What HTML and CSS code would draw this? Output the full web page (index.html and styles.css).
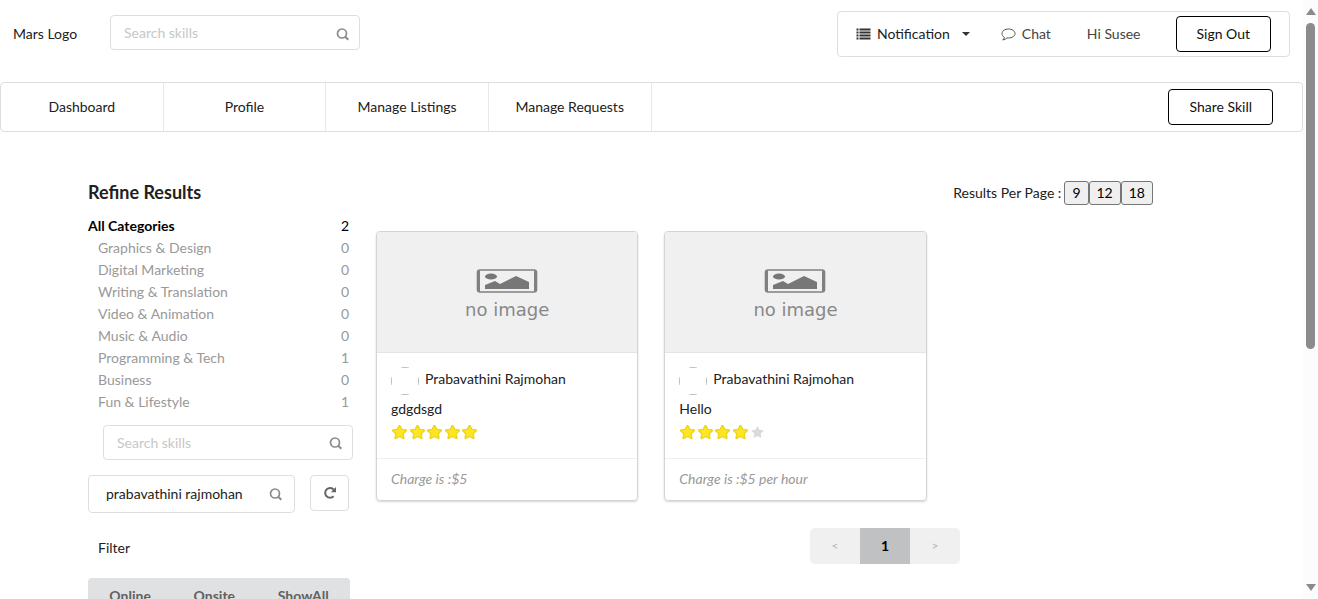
FILE: index.html
```html
<!DOCTYPE html>
<html lang="en">
<head>
<meta charset="utf-8">
<title>Search Skills</title>
<link rel="stylesheet" href="styles.css">
</head>
<body>
<svg class="defs" aria-hidden="true">
  <symbol id="search" viewBox="0 0 14 14"><circle cx="6" cy="6.500" r="4.500" fill="none" stroke="currentColor" stroke-width="1.700"/><path d="M9.200 9.700 12.300 12.800" stroke="currentColor" stroke-width="2"/></symbol>
  <symbol id="star" viewBox="0 0 1792 1792"><path stroke-linejoin="round" d="M1728 647q0 22-26 48l-363 354 86 500q1 7 1 20 0 21-10.500 35.500t-30.500 14.500q-19 0-40-12l-449-236-449 236q-22 12-40 12-21 0-31.500-14.500t-10.500-35.500q0-6 2-20l86-500-364-354q-25-27-25-48 0-37 56-46l502-73 225-455q19-41 49-41t49 41l225 455 502 73q56 9 56 46z"/></symbol>
  <symbol id="noimage" viewBox="0 0 62 24"><rect x="1.500" y="1" width="59" height="22" rx="2.500" fill="#f0f0f0" stroke="#808080" stroke-width="1.600"/><path d="M2.500 2v20M59.500 2v20" stroke="#808080" stroke-width="3"/><ellipse cx="15" cy="7.500" rx="6" ry="3" fill="#777"/><path d="M9 20v-4l10-4 5 3 16-8 13 6v7z" fill="#777"/></symbol>
</svg>
<div class="window">
  <div class="page">
    <header class="top">
      <span class="logo">Mars Logo</span>
      <div class="search top-search">
        <input type="text" placeholder="Search skills" aria-label="Search skills">
        <svg class="icon lower"><use href="#search"/></svg>
      </div>
      <div class="user-menu">
        <button class="plain notice">
          <svg class="list" viewBox="0 0 14 12"><path d="M0 1.500h2M3 1.500h11M0 4.500h2M3 4.500h11M0 7.500h2M3 7.500h11M0 10.500h2M3 10.500h11" stroke="#333" stroke-width="2"/></svg>
          Notification
          <svg class="caret" viewBox="0 0 8 4"><path d="M0 0h8L4 4z" fill="#333"/></svg>
        </button>
        <a class="chat" href="#"><svg class="bubble" viewBox="0 0 15 13"><path d="M7.500 1C11 1 14 2.900 14 5.500S11 10 7.500 10L6 9.900C5 11 3.500 11.800 1.800 12c.9-.7 1.300-1.500 1.500-2.800C1.800 8.400 1 7 1 5.500 1 2.900 4 1 7.500 1z" fill="none" stroke="#555"/></svg>Chat</a>
        <span class="greeting">Hi Susee</span>
        <button class="outline">Sign Out</button>
      </div>
    </header>
    <nav class="nav">
      <a href="#">Dashboard</a><a href="#">Profile</a><a href="#">Manage Listings</a><a href="#">Manage Requests</a>
      <button class="outline">Share Skill</button>
    </nav>
    <div class="content">
      <aside class="sidebar">
        <h3>Refine Results</h3>
        <ul class="categories">
          <li class="all"><a href="#"><b>All Categories</b><span>2</span></a></li>
          <li><a href="#">Graphics &amp; Design<span>0</span></a></li>
          <li><a href="#">Digital Marketing<span>0</span></a></li>
          <li><a href="#">Writing &amp; Translation<span>0</span></a></li>
          <li><a href="#">Video &amp; Animation<span>0</span></a></li>
          <li><a href="#">Music &amp; Audio<span>0</span></a></li>
          <li><a href="#">Programming &amp; Tech<span>1</span></a></li>
          <li><a href="#">Business<span>0</span></a></li>
          <li><a href="#">Fun &amp; Lifestyle<span>1</span></a></li>
        </ul>
        <div class="search side-search">
          <input type="text" placeholder="Search skills" aria-label="Search skills">
          <svg class="icon"><use href="#search"/></svg>
        </div>
        <div class="user-row">
          <div class="search user-search">
            <input type="text" value="prabavathini rajmohan" aria-label="Search user">
            <svg class="icon"><use href="#search"/></svg>
          </div>
          <button class="refresh" aria-label="Refresh"><svg viewBox="0 0 14 14"><path d="M10.600 10.300A4.900 4.900 0 1 1 10.800 3.700" fill="none" stroke="#666" stroke-width="2"/><path d="M13 1v5.200H7.800z" fill="#666"/></svg></button>
        </div>
        <p class="filter-title">Filter</p>
        <div class="filters"><button>Online</button><button>Onsite</button><button>ShowAll</button></div>
      </aside>
      <main class="main">
        <div class="per-page"><span>Results Per Page :</span><button>9</button><button>12</button><button>18</button></div>
        <div class="cards">
          <article class="card">
            <div class="image"><svg class="picture"><use href="#noimage"/></svg><span>no image</span></div>
            <div class="body">
              <a class="author" href="#"><i class="avatar"></i>Prabavathini Rajmohan</a>
              <p>gdgdsgd</p>
              <div class="stars" role="img" aria-label="5 of 5"><svg><use href="#star"/></svg><svg><use href="#star"/></svg><svg><use href="#star"/></svg><svg><use href="#star"/></svg><svg><use href="#star"/></svg></div>
            </div>
            <div class="charge">Charge is :$5</div>
          </article>
          <article class="card">
            <div class="image"><svg class="picture"><use href="#noimage"/></svg><span>no image</span></div>
            <div class="body">
              <a class="author" href="#"><i class="avatar"></i>Prabavathini Rajmohan</a>
              <p>Hello</p>
              <div class="stars" role="img" aria-label="4 of 5"><svg><use href="#star"/></svg><svg><use href="#star"/></svg><svg><use href="#star"/></svg><svg><use href="#star"/></svg><svg class="off"><use href="#star"/></svg></div>
            </div>
            <div class="charge">Charge is :$5 per hour</div>
          </article>
        </div>
        <div class="pages"><button disabled>&lt;</button><button class="current">1</button><button disabled>&gt;</button></div>
      </main>
    </div>
  </div>
  <div class="scrollbar" aria-hidden="true">
    <svg viewBox="0 0 10 7"><path d="M5 0 10 7H0z" fill="#8b8b8b"/></svg>
    <div class="track"><div class="thumb"></div></div>
    <svg viewBox="0 0 10 7"><path d="M5 7 10 0H0z" fill="#8b8b8b"/></svg>
  </div>
</div>
</body>
</html>
```
FILE: styles.css
```css
* { box-sizing: border-box; }
body { margin: 0; font: 14px/20px Lato, "Liberation Sans", sans-serif; color: #212121; background: #fff; }
button, input { font: inherit; color: inherit; margin: 0; }
button { cursor: pointer; }
a { color: inherit; text-decoration: none; }
h3, p, ul { margin: 0; padding: 0; }
.defs { display: none; }

.window { display: flex; height: 100vh; }
.page { flex: 1; min-width: 0; overflow: hidden; }

.top { display: flex; align-items: center; padding: 11px 13px 25px; }
.logo { width: 97px; }
.search { display: flex; align-items: center; border: 1px solid #dededf; border-radius: 4px; background: #fff; }
.search input { flex: 1; min-width: 0; border: 0; outline: 0; background: none; padding: 7px 13px; line-height: 19px; height: 33px; }
.search input::placeholder { color: #c7c7c7; }
.icon { width: 14px; height: 14px; margin-right: 9px; color: #8b8b8b; flex: none; }
.icon.lower { margin-top: 3px; }
.top-search { width: 250px; margin-bottom: 3px; }
.user-menu { display: flex; align-items: center; margin-left: auto; height: 46px; padding: 0 18px; border: 1px solid #dededf; border-radius: 4px; color: #444; }
.plain { display: flex; align-items: center; border: 0; background: none; padding: 0; color: #212121; }
.list { width: 15px; height: 12px; margin-right: 6px; }
.caret { width: 8px; height: 4px; margin-left: 12px; }
.chat { display: flex; align-items: center; margin: 0 36px 0 31px; }
.bubble { width: 15px; height: 13px; margin-right: 6px; }
.greeting { margin-right: 35px; }
.outline { height: 36px; padding: 0 20px; border: 1px solid #000; border-radius: 4px; background: #fff; color: #111; }

.nav { display: flex; align-items: center; height: 50px; border: 1px solid #dededf; border-radius: 4px; }
.nav a { flex: 0 0 12.5%; display: flex; align-items: center; justify-content: center; height: 48px; border-right: 1px solid #e8e8e8; }
.nav .outline { margin: 0 29px 0 auto; }

.content { display: grid; grid-template-columns: 262px minmax(0, 1fr); column-gap: 26px; margin: 0 88px; padding-top: 49px; }
.sidebar h3 { font-size: 18px; line-height: 22px; font-weight: 700; }
.categories { list-style: none; margin-top: 12px; color: #999; }
.categories a { display: flex; justify-content: space-between; line-height: 22px; padding: 0 1px 0 10px; }
.categories .all a { padding-left: 0; color: #000; }
.side-search { width: 250px; margin: 12px 0 15px 15px; }
.user-row { display: flex; align-items: flex-start; gap: 15px; padding-right: 1px; }
.user-search { flex: 1; min-width: 0; }
.user-search input { height: 36px; padding: 7px 0 9px 17px; }
.user-search .icon { margin-right: 11px; }
.refresh { display: flex; align-items: center; justify-content: center; width: 39px; height: 36px; padding: 0; border: 1px solid #dededf; border-radius: 4px; background: #fff; }
.refresh svg { width: 14px; height: 14px; }
.filter-title { margin: 25px 0 20px 10px; }
.filters { display: flex; border-radius: 4px; overflow: hidden; background: #e0e1e2; }
.filters button { flex: 1 1 auto; height: 36px; padding: 0; border: 0; background: none; font-weight: 700; color: #606060; }

.per-page { display: flex; justify-content: flex-end; align-items: center; padding-right: 62px; height: 24px; }
.per-page span { margin-right: 3px; }
.per-page button { height: 24px; padding: 1px 7px; border: 1px solid #767676; border-radius: 3px; background: #efefef; color: #000; }
.cards { display: grid; grid-template-columns: repeat(3, minmax(0, 1fr)); gap: 26px; margin-top: 26px; }
.card { border: 1px solid #d4d4d5; border-radius: 4px; box-shadow: 0 1px 2px #d4d4d5; overflow: hidden; }
.image { display: flex; flex-direction: column; align-items: center; height: 121px; padding-top: 37px; border-bottom: 1px solid #e4e4e4; background: #f0f0f0; color: #888; font: 18px/20px "DejaVu Sans", sans-serif; }
.image span { margin-top: 7px; }
.picture { width: 62px; height: 24px; }
.body { height: 105px; padding: 14px; }
.author { display: flex; align-items: center; gap: 6px; line-height: 24px; height: 24px; }
.avatar { width: 28px; height: 28px; margin-top: 4px; border-radius: 50%; background: linear-gradient(#bbb, #bbb) top / 8px 1px no-repeat, linear-gradient(#bbb, #bbb) bottom / 8px 1px no-repeat, linear-gradient(#bbb, #bbb) left / 1px 8px no-repeat, linear-gradient(#bbb, #bbb) right / 1px 8px no-repeat; }
.body p { margin-top: 8px; }
.stars { display: flex; justify-content: space-between; width: 85px; margin: 6px 0 0 1px; }
.stars svg { width: 15px; height: 15px; fill: #ffe623; stroke: #ecd51c; stroke-width: 160px; overflow: visible; }
.stars .off { fill: #dadada; stroke: none; padding: 1px; }
.charge { padding: 10px 14px 11px; border-top: 1px solid #f0f0f0; color: #999; font-style: italic; }
.pages { display: flex; width: 150px; margin: 27px 255px 0 auto; border-radius: 5px; overflow: hidden; }
.pages button { flex: 1; height: 36px; padding: 0; border: 0; background: #f0f0f0; color: #b4b4b4; font-size: 12px; }
.pages .current { background: #c0c1c2; color: #000; font-size: 14px; font-weight: 700; }

.scrollbar { display: flex; flex-direction: column; align-items: center; width: 15px; padding: 8px 0; background: #fcfcfc; }
.scrollbar svg { width: 10px; height: 7px; flex: none; }
.track { flex: 1; padding: 8px 0; }
.thumb { width: 9px; height: 59%; border-radius: 5px; background: #8b8b8b; }
```
